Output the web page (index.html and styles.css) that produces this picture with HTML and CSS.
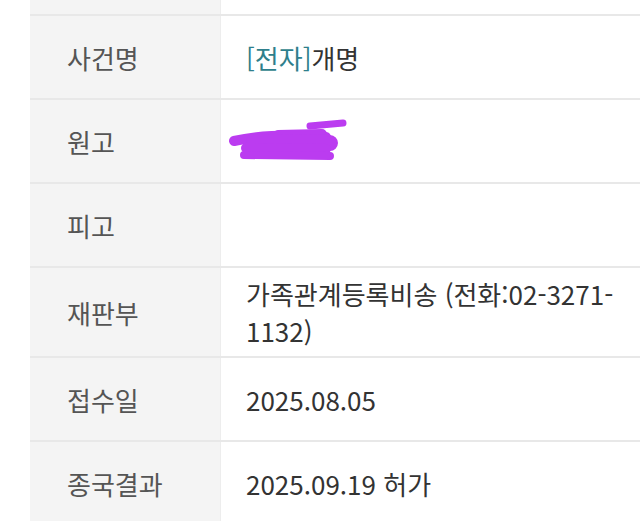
FILE: index.html
```html
<!DOCTYPE html>
<html lang="ko">
<head>
<meta charset="utf-8">
<link rel="stylesheet" href="styles.css">
</head>
<body>
<div class="table">
  <div class="row top">
    <div class="th"></div>
    <div class="td"></div>
  </div>
  <div class="row">
    <div class="th">사건명</div>
    <div class="td"><span class="tag">[전자]</span>개명</div>
  </div>
  <div class="row">
    <div class="th">원고</div>
    <div class="td">
      <svg class="scribble" width="124" height="46" viewBox="0 0 124 46">
        <g fill="none" stroke="#bb3cf0" stroke-linecap="round" stroke-linejoin="round">
          <path d="M 84 10 L 117 7" stroke-width="7"/>
          <path d="M 8 25 C 30 20, 60 18, 100 21" stroke-width="10"/>
          <path d="M 52 19 L 96 18" stroke-width="10"/>
          <path d="M 28 26 L 104 27" stroke-width="16"/>
          <path d="M 20 32 L 100 33" stroke-width="10"/>
          <path d="M 18 39 L 104 40" stroke-width="8"/>
        </g>
      </svg>
    </div>
  </div>
  <div class="row">
    <div class="th">피고</div>
    <div class="td"></div>
  </div>
  <div class="row">
    <div class="th">재판부</div>
    <div class="td">가족관계등록비송 (전화:02-3271-1132)</div>
  </div>
  <div class="row">
    <div class="th">접수일</div>
    <div class="td">2025.08.05</div>
  </div>
  <div class="row">
    <div class="th">종국결과</div>
    <div class="td">2025.09.19 허가</div>
  </div>
</div>
</body>
</html>
```
FILE: styles.css
```css
html, body {
  margin: 0;
  padding: 0;
  background: #ffffff;
}
body {
  font-family: "Noto Sans CJK KR", "Noto Sans", sans-serif;
  font-size: 26px;
  overflow: hidden;
}
.table {
  margin-left: 30px;
  margin-top: -68px;
}
.row {
  display: grid;
  grid-template-columns: 191px 1fr;
  border-bottom: 2px solid #e8e8e8;
  min-height: 82px;
}
.row:last-child {
  border-bottom: none;
}
.th {
  background: #f4f4f4;
  color: #555555;
  padding: 7px 0 7px 37px;
  display: flex;
  align-items: center;
  border-right: 1px solid #ededed;
  line-height: 37px;
}
.td {
  color: #333333;
  padding: 7px 20px 7px 25px;
  display: flex;
  align-items: center;
  line-height: 37px;
  word-break: break-all;
}
.tag {
  color: #2f7f8c;
}
.scribble {
  display: block;
  margin: -4px 0 0 -20px;
}
```
